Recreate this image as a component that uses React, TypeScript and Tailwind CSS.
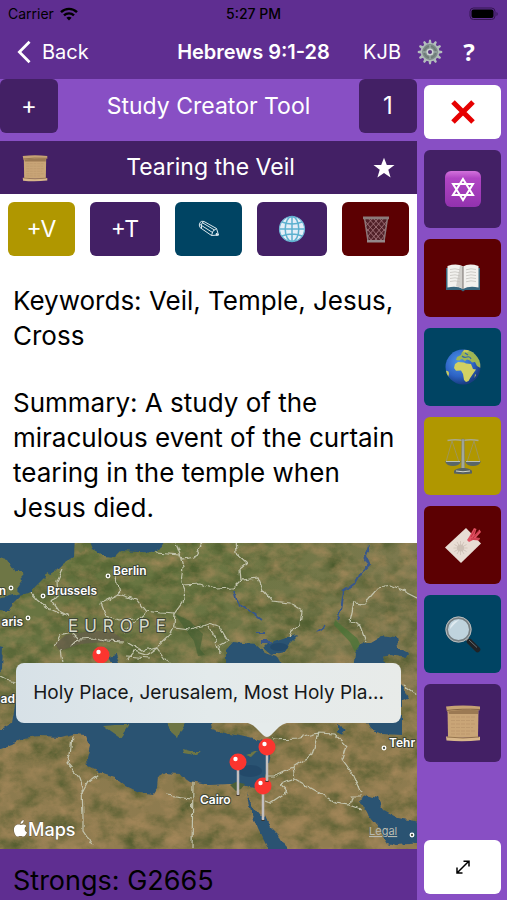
import type { ReactNode } from "react";

function BackIcon() {
  return (
    <svg viewBox="0 0 16 26" className="h-6 w-4" fill="none" stroke="currentColor" strokeWidth="3">
      <path d="M14 2 3 13l11 11" />
    </svg>
  );
}

function WifiIcon() {
  return (
    <svg viewBox="0 0 18 14" className="h-[14px] w-[18px]" fill="none" stroke="currentColor" strokeWidth="2.4">
      <path d="M1 5.2C5.5.8 12.5.8 17 5.2M4 8.4c2.8-2.7 7.2-2.7 10 0" />
      <path d="M6.4 10.8C8 9.4 10 9.4 11.600 10.800L9 13.600Z" fill="currentColor" stroke="none" />
    </svg>
  );
}

function BatteryIcon() {
  return (
    <svg viewBox="0 0 30 14" className="h-[14px] w-[30px]">
      <rect x="1" y="1" width="25" height="11.500" rx="3.500" fill="none" stroke="#351653" />
      <rect x="2.500" y="2.500" width="22" height="8.500" rx="2" fill="#000" />
      <path d="M27.500 5c1.600.5 1.600 3.500 0 4z" fill="#351653" />
    </svg>
  );
}

const TEETH = [0, 30, 60, 90, 120, 150, 180, 210, 240, 270, 300, 330];

function GearIcon() {
  return (
    <svg viewBox="0 0 26 26" className="h-[26px] w-[26px]">
      {TEETH.map((a) => (
        <path key={a} d="M11.300 5 12.100.8h1.800L14.700 5z" fill="#b4bfbd" transform={`rotate(${a} 13 13)`} />
      ))}
      <circle cx="13" cy="13" r="8.600" fill="#7e8b89" stroke="#b0bcb9" strokeWidth="1.400" />
      <circle cx="13" cy="13" r="5.800" fill="none" stroke="#6d7977" strokeWidth="1.400" />
      <path d="M13 6v4M13 16v4M6 13h4M16 13h4" stroke="#98a5a2" strokeWidth="1.500" />
      <circle cx="13" cy="13" r="2.800" fill="#59377f" stroke="#cdd5d2" strokeWidth="1.500" />
    </svg>
  );
}

function ScrollIcon({ className }: { className: string }) {
  return (
    <svg viewBox="0 0 36 38" className={className}>
      <path d="M2.500 5h31l-.5 28H3z" fill="#c9a577" />
      <path d="M3 6h30v4H4z" fill="#9b7953" />
      <path d="M1 2.500Q18 .5 35 2.500v3.800Q18 5 2 7.500z" fill="#c6a273" />
      <path d="M1.500 6.500Q16 4.500 35 5.500" fill="none" stroke="#75563a" strokeWidth=".8" />
      <path d="M6 13h24M6 16.500h23M6 20h24M6 23.500h22M6 27h24M6 30h20" stroke="#b8936a" strokeWidth=".7" strokeDasharray="4 1" />
      <path d="M1 32.500q17 1.500 34 .2v3.500q-17 2-33.500.3z" fill="#d7b68a" />
      <path d="M2 33q16 2 32 0" fill="none" stroke="#86643f" strokeWidth=".8" />
    </svg>
  );
}

function StarIcon() {
  return (
    <svg viewBox="0 0 22 22" className="h-[22px] w-[22px]" fill="currentColor">
      <path d="M11 .8 13.800 8H21.500L15.300 12.700 17.600 20.500 11 16 4.400 20.500 6.700 12.700.5 8H8.200Z" />
    </svg>
  );
}

function PencilIcon() {
  return (
    <svg viewBox="0 0 22 18" className="h-[18px] w-[22px]" fill="none" stroke="#dce8ee" strokeWidth="1">
      <path d="M2 2.500Q3.500.5 6 1.500L18.500 8.500 20.500 15 13.500 15.500 2 7.500Q.5 5 2 2.500Z" />
      <path d="M2 4.500 14.500 12.500M4 2.500 16.500 10M18.500 8.500Q14 10 13.500 15.500M5.500 1.500Q2.500 3.500 3.500 8" />
      <path d="m18.500 13 2 2-2.500.2z" fill="#dce8ee" />
    </svg>
  );
}

function GlobeIcon() {
  return (
    <svg viewBox="0 0 28 28" className="h-7 w-7">
      <circle cx="14" cy="14" r="12.500" fill="#e5eef8" stroke="#70b9d6" strokeWidth="1.200" />
      <g fill="none" stroke="#5eb1cf" strokeWidth="1.500">
        <path d="M14 1.500v25M1.500 14h25M4 7q10 4 20 0M4 21q10-4 20 0" />
        <ellipse cx="14" cy="14" rx="6.800" ry="12.500" />
      </g>
    </svg>
  );
}

function TrashIcon() {
  return (
    <svg viewBox="0 0 28 30" className="h-[30px] w-7">
      <path d="M2.500 4h23L22 27.500H6z" fill="#512128" />
      <path
        d="m3 7 17 20M6 4l17 19M11 4l13 14M17 4l8 9M4 14l12 13M5 21l5 6M25 7 8 27M22 4 5 23M17 4 4 18M11 4l-8 9M24 14 12 27M23 21l-5 6"
        stroke="#a3747a"
        strokeWidth=".9"
      />
      <path d="m2.500 4 3.500 23M25.500 4 22 27" stroke="#8d7678" strokeWidth="1.500" />
      <path d="M1 2.500h26v2.800H1z" fill="#8b7b7b" />
      <path d="M5 26h18v2.500H5z" fill="#94888a" />
    </svg>
  );
}

function HexagramIcon() {
  return (
    <svg viewBox="0 0 36 36" className="h-9 w-9">
      <defs>
        <linearGradient id="hexagram" x1="0" y1="0" x2="0" y2="1">
          <stop offset="0" stopColor="#d372dc" />
          <stop offset=".2" stopColor="#b145c4" />
          <stop offset="1" stopColor="#9232ae" />
        </linearGradient>
      </defs>
      <rect width="36" height="36" rx="6" fill="url(#hexagram)" />
      <path d="M18 8 28 24H8ZM18 29 8 13H28Z" fill="none" stroke="#fff" strokeWidth="2" />
    </svg>
  );
}

function BookIcon() {
  return (
    <svg viewBox="0 0 36 30" className="h-[30px] w-9">
      <path d="M1 5h34v22H20l-2 1.500-2-1.500H1z" fill="#37657c" />
      <path d="M2.500 3Q12 0 18 3.500q6-3.500 15.500-.5v21.500Q24 22.500 18 26q-6-3.500-15.500-1.500z" fill="#f2f1ee" />
      <path d="M18 3.500V26q-4-3-7-2.500l4-21q2 0 3 1z" fill="#d0ceca" />
      <path d="M18 3.500V26" stroke="#77716d" strokeWidth="1" />
      <path
        d="M5 6.500q5-1.500 10 .3M5 9.500q5-1.500 10 .3M5 12.500q5-1.500 10 .3M5 15.500q5-1.500 10 .3M5 18.500q5-1.500 10 .3M21 6.800q5-1.800 10-.3M21 9.800q5-1.800 10-.3M21 12.800q5-1.800 10-.3M21 15.800q5-1.800 10-.3M21 18.800q5-1.800 10-.3"
        fill="none"
        stroke="#c4c1bc"
        strokeWidth=".8"
      />
    </svg>
  );
}

function EarthIcon() {
  return (
    <svg viewBox="0 0 36 36" className="h-9 w-9">
      <defs>
        <radialGradient id="ocean" cx=".38" cy=".35" r=".65">
          <stop offset="0" stopColor="#4e94e8" />
          <stop offset=".65" stopColor="#2c62c4" />
          <stop offset="1" stopColor="#193d83" />
        </radialGradient>
        <clipPath id="earth">
          <circle cx="18" cy="18" r="17.500" />
        </clipPath>
      </defs>
      <circle cx="18" cy="18" r="17.500" fill="url(#ocean)" />
      <g clipPath="url(#earth)">
        <path d="m11 11 1-3 4-2 1-3 3-2 9 1 7 9-.5 8-3.500-2-2-4-3 .500-2-2-3-1-2 1.500-3-2-3 1.500z" fill="#9fb653" />
        <path d="m10 15 3-2 6 .5 2 1 5 .5 2 5 3 .5-3.500 5-2 3-2 3.500-2.500 1-2-2-1-6-2-3.500-5 .3-2-2.800z" fill="#d2d163" />
        <path d="M0 22q4-1 4 3l-1.500 5-2.500-3zM19 .5l6 1-3 2-4-.5z" fill="#c9cb5e" />
        <path d="M17 7q2 2 5 1t4 2M20 4l3 2" fill="none" stroke="#3468ae" strokeWidth="1.200" />
        <path d="m30 25 1 1-1.500 3z" fill="#c5cb59" />
      </g>
    </svg>
  );
}

function ScalesIcon() {
  return (
    <svg viewBox="0 0 36 38" className="h-[38px] w-9" fill="none">
      <path d="M2.500 3.500Q10 2 18 3.500q8-1.500 15.500 0" stroke="#aaa98c" strokeWidth="1.600" />
      <path d="M7 4 1 25M7 4l7 21M29 4l-7 21M29 4l6 21" stroke="#9a966c" strokeWidth=".8" />
      <path d="M16.800 2h2.400l.6 30h-3.600z" fill="#a2a89c" stroke="#747965" strokeWidth=".5" />
      <path d="M0 24.500h16q-2 4.500-8 4.500T0 24.500ZM20 24.500h16q-2 4.500-8 4.500t-8-4.500Z" fill="#596667" />
      <path d="M1 24.500h14M21 24.500h14" stroke="#b9c0b4" />
      <path d="M9 34q1-2 7-3h4q6 1 7 3v2.500q-9 1.500-18 0z" fill="#586263" />
      <path d="M11 34q7 1.500 14 0" stroke="#d3d8cc" />
    </svg>
  );
}

function BookmarkIcon() {
  return (
    <svg viewBox="0 0 38 38" className="h-[38px] w-[38px]">
      <path d="M22 2 37 17.500 17 37 1 21.500Z" fill="#e8ddd4" />
      <g stroke="#cabdb3" strokeWidth=".7">
        {TEETH.map((a) => (
          <path key={a} d="M16.500 15v6" transform={`rotate(${a} 16.500 22)`} />
        ))}
      </g>
      <circle cx="16.500" cy="22" r="3.500" fill="#cdc0b6" />
      <path d="m25 11 5-9 2.500 1-2 6 5-5.500L37 6l-5 5.500 4 .5-1 2.500-6-.5-4 2-2-2z" fill="#e05060" />
      <path d="m27 11 4-7M29 12l6-7M27 13l8 0" stroke="#b8283c" strokeWidth=".8" />
    </svg>
  );
}

function MagnifierIcon() {
  return (
    <svg viewBox="0 0 36 38" className="h-[38px] w-9">
      <path d="m21 23 4 4" stroke="#a7aaaa" strokeWidth="3" />
      <path d="m24.500 26.500 8 8" stroke="#202326" strokeWidth="5.500" strokeLinecap="round" />
      <path d="m24 25 8 7.500" stroke="#6b7072" strokeWidth="1" />
      <circle cx="13.500" cy="14.500" r="11.800" fill="#bfd3dd" stroke="#777f82" strokeWidth="2.600" />
      <circle cx="13.500" cy="14.500" r="12.600" fill="none" stroke="#c8cecf" strokeWidth=".8" />
      <path d="M5 14a9 9 0 0 1 9-9q-5 4-9 9z" fill="#dfeaf0" />
    </svg>
  );
}

function ExpandIcon() {
  return (
    <svg viewBox="0 0 14 14" className="h-[14px] w-[14px]" fill="none" stroke="currentColor" strokeWidth="1.500">
      <path d="M1 13 13 1M7.500 1.200H13v5.300M1 7.500v5.500h5.500" />
    </svg>
  );
}

const pins = [
  { x: 101, y: 112, base: 150 },
  { x: 238, y: 219, base: 252 },
  { x: 263, y: 243, base: 277 },
  { x: 267, y: 204, base: 238 },
];

function StudyMap() {
  return (
    <svg viewBox="0 0 417 306" preserveAspectRatio="xMidYMid slice" className="block h-[306px] w-full" role="img" aria-label="Map of study places">
      <defs>
        <linearGradient id="land" x1="0" y1="0" x2=".1" y2="1">
          <stop offset="0" stopColor="#66753f" />
          <stop offset=".4" stopColor="#6b7544" />
          <stop offset=".62" stopColor="#88794c" />
          <stop offset="1" stopColor="#907c50" />
        </linearGradient>
        <linearGradient id="steppe" x1="0" y1="0" x2="1" y2="0">
          <stop offset=".45" stopColor="#8d7c58" stopOpacity="0" />
          <stop offset="1" stopColor="#8d7c58" stopOpacity=".6" />
        </linearGradient>
        <filter id="terrain" x="0" y="0" width="100%" height="100%" colorInterpolationFilters="sRGB">
          <feTurbulence type="fractalNoise" baseFrequency=".04 .055" numOctaves="5" seed="8" />
          <feColorMatrix values="0 0 0 0 .24  0 0 0 0 .32  0 0 0 0 .14  1.800 0 0 0 -.7" />
        </filter>
        <filter id="highlands" x="0" y="0" width="100%" height="100%" colorInterpolationFilters="sRGB">
          <feTurbulence type="fractalNoise" baseFrequency=".06 .08" numOctaves="5" seed="31" />
          <feColorMatrix values="0 0 0 0 .7  0 0 0 0 .56  0 0 0 0 .38  0 1.800 0 0 -.7" />
        </filter>
        <filter id="coast" x="-5%" y="-5%" width="110%" height="110%">
          <feTurbulence type="fractalNoise" baseFrequency=".12" numOctaves="2" seed="4" result="noise" />
          <feDisplacementMap in="SourceGraphic" in2="noise" scale="6" xChannelSelector="R" yChannelSelector="G" />
        </filter>
      </defs>

      <rect width="417" height="306" fill="url(#land)" />
      <rect width="417" height="150" fill="url(#steppe)" />
      <rect width="417" height="306" filter="url(#terrain)" opacity=".8" />
      <rect width="417" height="306" filter="url(#highlands)" opacity=".7" />
      <path d="M55 101 66 92 85 89 100 88 114 90 125 98 105 99 80 101 60 108Z" fill="#655c4c" opacity=".7" />
      <path d="M175 71 190 78 203 91 200 106 205 112 198 113 194 98 185 86Z" fill="#3f5e30" opacity=".6" />
      <path d="m335 77 22 18 5 10-7 4-5-10-16-17z" fill="#4a7437" opacity=".75" />

      {/* Seas */}
      <g fill="#2c5272" filter="url(#coast)">
        <path d="M-9-9H75L74 14 62 22 55 29 50 32 46 29 45 34 37 42 30 49 20 53 13 60 8 69-9 67Z" />
        <path d="M86-9 92 6 103 13 114 14 120 8 140 9 155 10 160 5 168-9Z" />
        <path d="M-5 102 3 104 2 126-5 134Z" />
        <path d="M-5 190 12 180 17 150H205L212 186 225 190 240 193 258 197 271 199 270 212 266 230 263 244 255 245 241 242 231 241 208 242 190 239 178 231 165 230 158 234 157 245 153 251 140 249 125 242 115 234 100 229 88 223 87 215 90 203 85 192 74 191 60 194 40 193 23 195 12 201-5 207Z" />
        <path d="M226 107 233 99 255 101 265 110 279 115 284 125H226Z" />
        <path d="M263 105 268 100 286 94 298 92 290 100 285 109 271 112Z" />
        <path d="M353 125 355 110 361 102 371 99 381 93 396 95 398 104 408 110 405 115 391 112 383 114 388 130 403 144 408 155 402 158V192L381 191 371 187 362 170Z" />
        <path d="m338 182 7 4-3 6-4-4z" />
        <path d="M246 250 254 266 263 277 265 272 270 284 280 294 290 310H270L258 285 249 262Z" />
        <path d="M360 257 368 252 378 255 383 267 398 275 425 280V300L395 302 388 300 381 289 368 272Z" />
        <path d="m108 114 8-2 3 8h-8z" />
      </g>
      <g fill="#204364" opacity=".6">
        <ellipse cx="279" cy="104" rx="9" ry="4" />
        <ellipse cx="250" cy="228" rx="12" ry="6" />
      </g>
      <g fill="#6e7644" filter="url(#coast)">
        <path d="M-5 14 7 17 15 29 22 29 23 38 17 47 20 50-5 57Z" />
        <path d="M103 183 115 182 129 182 120 195 110 188Z" />
        <path d="M167 178H187L181 188 178 195 170 188Z" />
        <path d="m183 206 7 2h12l-7 4-11-2z" />
        <path d="m246 212 12-4-6 6z" />
        <path d="m76 2 5 7 3-1-3-9z" />
      </g>
      <path d="m230 242 6-3 9 2-4 5-5 2z" fill="#4b5f38" />

      {/* Rivers */}
      <g fill="none" stroke="#38578a" strokeWidth="2" filter="url(#coast)">
        <path d="m369 2-4 12 4 8-8 8-5 9-12 8-3 20-4 10" />
        <path d="m234 48 3 12 12 8 12 9M256 89h10M326 82l-9 7M270 99h-8" strokeWidth="1.800" />
      </g>

      {/* Borders */}
      <g fill="none" stroke="#c3c4ad" strokeWidth="1.200" filter="url(#coast)">
        <path d="M156 10 180 12 183 24 181 38 185 48 183 60 175 71 174 82 168 94 157 104 142 108 128 100" />
        <path d="M175-3 182 16 195 14 200 4 206-3M183 42 200 41 215 46 233 45M63 26 57 39 58 52 52 58 60 69 70 74M30 49 38 58 47 65 58 70" />
        <path d="M115 29 119 51 136 57 146 70 130 84 124 90M119 51 101 60 106 73 118 78 135 76M146 68 160 70 175 71M174 84 190 86 209 81" />
        <path d="M55 103 60 92 72 89 79 96 96 95 107 98 124 99M60 105 62 120M70 104 78 96M126 118 134 108 147 112 157 105 168 120M126 113 150 115" />
        <path d="M-2 133 6 137 16 139" />
        <path d="M235-3 236 10 247 20 240 26 241 37 258 35 263 47 272 58 291 60 302 67 300 82 292 88 289 94M241 37 233 45M208 80 219 83 228 98 219 103 220 112M208 83 214 93 217 106 222 110" />
        <path d="M366 99 360 83 350 78 354 60 364 61 378 45 391 43 405 49 417 55M403 142 417 152" />
        <path d="M72 194 70 212 67 220 78 233 82 244 83 275 83 288 93 303M98 231 88 239 81 252M193 240 192 306M166 252 191 255" />
        <path d="M272 196 300 195 318 190 335 191 346 203 342 216 352 230 361 250M318 190 312 212 293 224 274 233 267 233M293 224 295 236 280 241 288 248 270 260 265 258M295 236 318 249 335 260 350 262 352 254 361 254M350 262 361 266" />
      </g>

      {/* Place names */}
      <g
        fontFamily="Inter, sans-serif"
        fontSize="12"
        fontWeight="600"
        fill="#fff"
        stroke="#3f4637"
        strokeWidth="2"
        strokeLinejoin="round"
        paintOrder="stroke"
      >
        <text x="113" y="32">Berlin</text>
        <text x="47" y="52">Brussels</text>
        <text x="6" y="52" textAnchor="end">n</text>
        <text x="23" y="83" textAnchor="end">aris</text>
        <text x="15" y="160" textAnchor="end">ad</text>
        <text x="200" y="261">Cairo</text>
        <text x="389" y="204">Tehr</text>
        <text x="68" y="89" fontSize="17" fontWeight="400" letterSpacing="6" fill="#d8dacb">EUROPE</text>
      </g>
      <g fill="#4c5443" stroke="#fff" strokeWidth="1.300">
        <circle cx="108" cy="33" r="1.800" />
        <circle cx="43" cy="53" r="1.800" />
        <circle cx="11" cy="45" r="1.800" />
        <circle cx="28" cy="75" r="1.800" />
        <circle cx="384" cy="205" r="1.800" />
        <circle cx="412" cy="292" r="1.800" />
      </g>

      {/* Pins */}
      {pins.map((pin) => (
        <g key={`${pin.x}-${pin.y}`}>
          <ellipse cx={pin.x} cy={pin.base} rx="2" ry="1" fill="#3d352a" />
          <path d={`M${pin.x} ${pin.y}V${pin.base}`} stroke="#c2bfc0" strokeWidth="2.500" />
          <circle cx={pin.x} cy={pin.y} r="8.500" fill="#fb352f" />
          <circle cx={pin.x - 2.5} cy={pin.y - 3} r="2.200" fill="#fff" />
        </g>
      ))}
      <path d="M244 179Q252 180 258 187L263 192Q267 196 271 192L276 187Q282 180 291 179Z" fill="#e5ebeb" />

      <g fill="#fff" stroke="#5d5340" strokeWidth=".8" paintOrder="stroke">
        <path d="M20.500 282c1.500 0 2.600-.8 4-.3 1 .3 1.500.8 1.900 1.400-2.600 1.700-2.100 5 .6 6.200-.6 1.900-2 4.300-3.700 4.300-1 0-1.500-.6-2.800-.6s-1.800.6-2.800.6c-2 0-3.800-3.800-3.800-6.800 0-4.500 4-6.200 6.600-4.800zM20.500 281c0-2 1.300-3.600 3.200-4 .2 2-1.200 3.800-3.200 4z" />
        <text x="28" y="293" fontFamily="Inter, sans-serif" fontSize="18" fontWeight="500">Maps</text>
      </g>
      <a href="#legal">
        <text x="369" y="292" fontFamily="Inter, sans-serif" fontSize="11" fill="#b9bab0" textDecoration="underline">Legal</text>
      </a>
    </svg>
  );
}

interface Tool {
  label: string;
  color: string;
  icon: ReactNode;
}

const sideTools: Tool[] = [
  { label: "Hebrew", color: "bg-[#432065]", icon: <HexagramIcon /> },
  { label: "Read", color: "bg-[#5c0002]", icon: <BookIcon /> },
  { label: "Places", color: "bg-[#004463]", icon: <EarthIcon /> },
  { label: "Compare", color: "bg-[#b09700]", icon: <ScalesIcon /> },
  { label: "Bookmarks", color: "bg-[#5c0002]", icon: <BookmarkIcon /> },
  { label: "Search", color: "bg-[#004463]", icon: <MagnifierIcon /> },
  { label: "Studies", color: "bg-[#432065]", icon: <ScrollIcon className="h-[38px] w-9" /> },
];

const studyActions: (Tool & { width: string })[] = [
  { label: "Add verse", width: "w-[67px]", color: "bg-[#b09700]", icon: "+V" },
  { label: "Add text", width: "w-[70px]", color: "bg-[#432065]", icon: "+T" },
  { label: "Edit", width: "w-[67px]", color: "bg-[#004463]", icon: <PencilIcon /> },
  { label: "Web", width: "w-[70px]", color: "bg-[#432065]", icon: <GlobeIcon /> },
  { label: "Delete", width: "w-[67px]", color: "bg-[#5c0002]", icon: <TrashIcon /> },
];

export default function App() {
  return (
    <div className="flex min-h-screen flex-col bg-[#5f2e91] font-['Inter',sans-serif] text-white">
      <header className="h-[79px]">
        {/* Status bar */}
        <div className="grid h-[27px] grid-cols-3 items-center px-2 text-sm text-black">
          <div className="flex items-center gap-1.5">
            <span>Carrier</span>
            <WifiIcon />
          </div>
          <span className="text-center font-medium">5:27 PM</span>
          <div className="flex justify-end">
            <BatteryIcon />
          </div>
        </div>

        {/* Navigation */}
        <nav className="grid h-[50px] grid-cols-[1fr_auto_1fr] items-center px-4 text-xl">
          <button className="flex items-center gap-2.5">
            <BackIcon />
            <span>Back</span>
          </button>
          <h1 className="font-semibold">Hebrews 9:1-28</h1>
          <div className="flex items-center justify-end gap-4 pr-3">
            <button>KJB</button>
            <button aria-label="Settings">
              <GearIcon />
            </button>
            <button aria-label="Help" className="w-5 font-['Noto_Sans',sans-serif] text-2xl font-bold">
              ?
            </button>
          </div>
        </nav>
      </header>

      <div className="flex flex-1">
        <main className="flex min-w-0 flex-1 flex-col">
          <div className="flex h-[62px] items-start justify-between bg-[#884fc4]">
            <button aria-label="Add study" className="h-[54px] w-[58px] rounded-md bg-[#432065] text-2xl">
              +
            </button>
            <h2 className="text-[23px] leading-[54px]">Study Creator Tool</h2>
            <button aria-label="Study 1" className="h-[54px] w-[58px] rounded-md bg-[#432065] text-2xl">
              1
            </button>
          </div>

          <div className="flex h-[53px] items-center justify-between bg-[#432065] px-[22px]">
            <ScrollIcon className="h-7 w-[26px]" />
            <h3 className="text-[23px]">Tearing the Veil</h3>
            <button aria-label="Favorite">
              <StarIcon />
            </button>
          </div>

          <section className="bg-white px-2 pt-2 pb-[18px] text-black">
            <div className="flex justify-between">
              {studyActions.map((action) => (
                <button
                  key={action.label}
                  aria-label={action.label}
                  className={`flex h-[54px] items-center justify-center rounded-md text-[23px] text-white ${action.width} ${action.color}`}
                >
                  {action.icon}
                </button>
              ))}
            </div>
            <div className="mt-[27px] space-y-8 pl-[5px] text-[26px] leading-[35px]">
              <p>Keywords: Veil, Temple, Jesus, Cross</p>
              <p>Summary: A study of the miraculous event of the curtain tearing in the temple when Jesus died.</p>
            </div>
          </section>

          <section className="relative overflow-hidden">
            <StudyMap />
            <div className="absolute inset-x-4 top-[120px] flex h-[60px] items-center justify-center rounded-lg bg-linear-to-r from-[#d7e1e7] via-[#e3eaeb] to-[#e8ebe9] text-[19px] whitespace-nowrap text-[#161819]">
              Holy Place, Jerusalem, Most Holy Pla...
            </div>
          </section>

          <p className="px-[13px] pt-[14px] text-[27px] leading-[35px] text-black">Strongs: G2665</p>
        </main>

        <aside className="flex w-[90px] flex-col gap-[11px] bg-[#884fc4] py-1.5 pr-1.5 pl-[7px]">
          <button aria-label="Close" className="flex h-[54px] items-center justify-center rounded-md bg-white">
            <svg viewBox="0 0 24 24" className="h-6 w-6" stroke="#e60000" strokeWidth="5">
              <path d="m2 2 20 20M22 2 2 22" />
            </svg>
          </button>
          {sideTools.map((tool) => (
            <button
              key={tool.label}
              aria-label={tool.label}
              className={`flex h-[78px] items-center justify-center rounded-md ${tool.color}`}
            >
              {tool.icon}
            </button>
          ))}
          <button aria-label="Expand" className="mt-auto flex h-[54px] items-center justify-center rounded-md bg-white text-black">
            <ExpandIcon />
          </button>
        </aside>
      </div>
    </div>
  );
}
